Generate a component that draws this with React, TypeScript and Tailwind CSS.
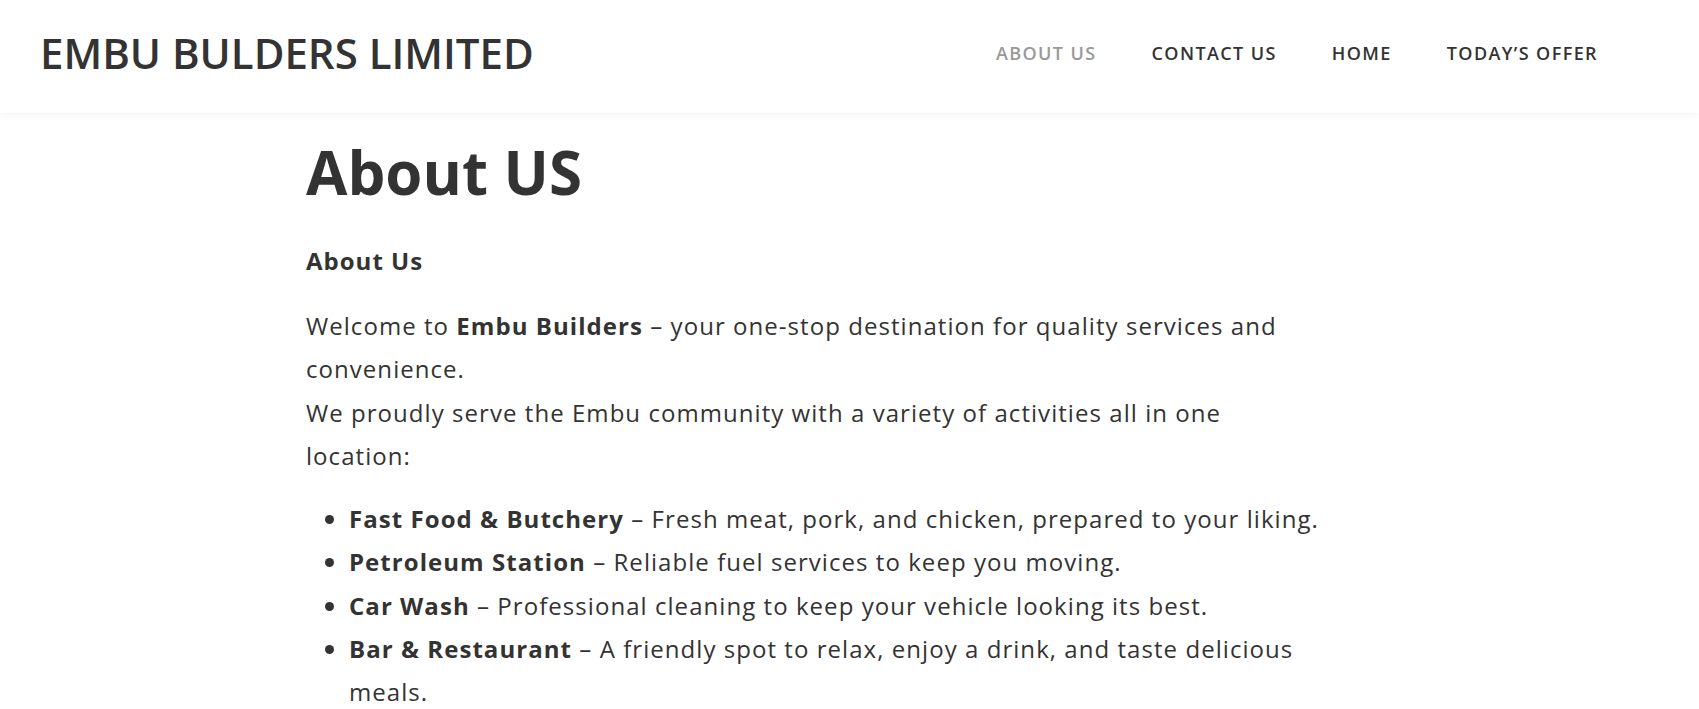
const navItems = [
  { label: "ABOUT US", active: true },
  { label: "CONTACT US", active: false },
  { label: "HOME", active: false },
  { label: "TODAY’S OFFER", active: false },
];

const services = [
  {
    name: "Fast Food & Butchery",
    text: "Fresh meat, pork, and chicken, prepared to your liking.",
  },
  {
    name: "Petroleum Station",
    text: "Reliable fuel services to keep you moving.",
  },
  {
    name: "Car Wash",
    text: "Professional cleaning to keep your vehicle looking its best.",
  },
  {
    name: "Bar & Restaurant",
    text: "A friendly spot to relax, enjoy a drink, and taste delicious meals.",
  },
];

const App = () => {
  return (
    <div className="min-h-screen bg-white font-['Open_Sans',sans-serif] text-[#333333]">
      <header className="relative z-10 flex h-[113px] items-center justify-between bg-white pb-[7px] pl-10 pr-[101px] shadow-[0_2px_8px_rgba(0,0,0,0.05)]">
        <a href="#" className="text-[42px] font-semibold leading-none text-[#333333]">
          EMBU BULDERS LIMITED
        </a>
        <nav className="flex items-center gap-[55px]">
          {navItems.map((item) => (
            <a
              key={item.label}
              href="#"
              className={`text-[18px] font-semibold leading-none tracking-[1.4px] ${
                item.active ? "text-[#999999]" : "text-[#333333]"
              }`}
            >
              {item.label}
            </a>
          ))}
        </nav>
      </header>

      <main className="ml-[306px] w-[1024px] pt-[23px]">
        <h1 className="text-[60px] font-bold leading-[73px]">About US</h1>
        <h3 className="mt-[38px] text-[24px] font-bold leading-[27px] tracking-[1px]">About Us</h3>
        <p className="mt-[30px] text-[24px] leading-[43.3px] tracking-[1.05px]">
          Welcome to <strong className="font-bold">Embu Builders</strong> – your one-stop
          destination for quality services and convenience.
          <br />
          We proudly serve the Embu community with a variety of activities all in one
          location:
        </p>
        <ul className="mt-[20px] list-disc pl-[43px] text-[24px] leading-[43.3px] tracking-[1.05px]">
          {services.map((s) => (
            <li key={s.name}>
              <strong className="font-bold">{s.name}</strong> – {s.text}
            </li>
          ))}
        </ul>
      </main>
    </div>
  );
};

export default App;
